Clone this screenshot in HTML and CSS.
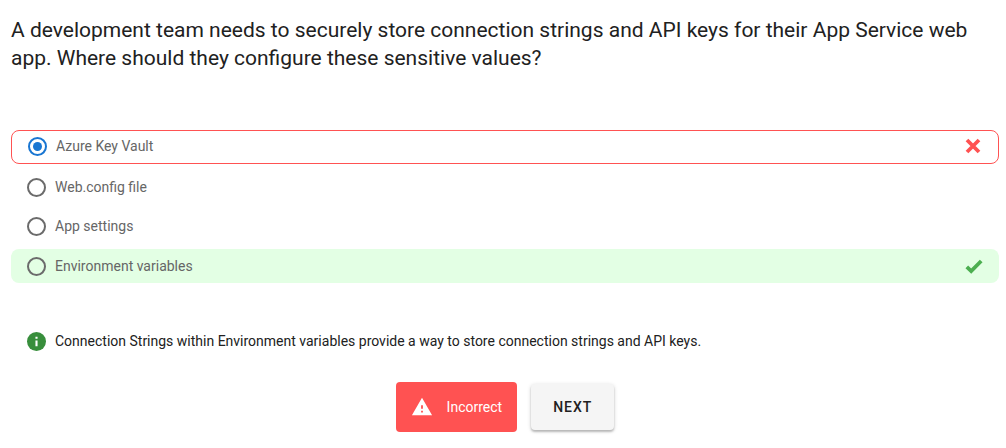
FILE: index.html
```html
<!DOCTYPE html>
<html lang="en">
<head>
<meta charset="utf-8">
<meta name="viewport" content="width=device-width, initial-scale=1">
<title>Quiz question</title>
<link rel="stylesheet" href="styles.css">
</head>
<body>
<main class="quiz">
  <h1 class="question" id="question">A development team needs to securely store connection strings and API keys for their App Service web app. Where should they configure these sensitive values?</h1>
  <div class="options" role="radiogroup" aria-labelledby="question">
    <label class="option option-wrong">
      <input class="radio" type="radio" name="answer" checked>
      <span class="label">Azure Key Vault</span>
      <svg class="mark" viewBox="0 0 18 18" aria-hidden="true"><path d="M3 3 15 15M15 3 3 15" fill="none" stroke="#ff5252" stroke-width="3.8"/></svg>
    </label>
    <label class="option">
      <input class="radio" type="radio" name="answer">
      <span class="label">Web.config file</span>
    </label>
    <label class="option">
      <input class="radio" type="radio" name="answer">
      <span class="label">App settings</span>
    </label>
    <label class="option option-correct">
      <input class="radio" type="radio" name="answer">
      <span class="label">Environment variables</span>
      <svg class="mark" viewBox="0 0 18 18" aria-hidden="true"><path d="M1.8 9.8 6.2 14 16.2 4" fill="none" stroke="#4caf50" stroke-width="3.8"/></svg>
    </label>
  </div>
  <p class="explanation">
    <svg class="info" viewBox="0 0 18 18" aria-hidden="true"><circle cx="9" cy="9" r="9" fill="#388e3c"/><path d="M8 4.5h2v2H8zM8 8h2v5.5H8z" fill="#fff"/></svg>
    <span>Connection Strings within Environment variables provide a way to store connection strings and API keys.</span>
  </p>
  <div class="actions">
    <div class="status" role="status">
      <svg class="warning" viewBox="0 0 24 24" aria-hidden="true"><path d="M1 21h22L12 2 1 21zm12-3h-2v-2h2v2zm0-4h-2v-4h2v4z" fill="#fff"/></svg>
      <span>Incorrect</span>
    </div>
    <button class="next" type="button">NEXT</button>
  </div>
</main>
</body>
</html>
```
FILE: styles.css
```css
* {
  box-sizing: border-box;
}

body {
  margin: 0;
  background: #fff;
  color: #212121;
  font-family: Roboto, "Liberation Sans", sans-serif;
  font-size: 14px;
  line-height: 20px;
}

.quiz {
  padding: 16px 7px 16px 11px;
}

.question {
  margin: 0 0 58px;
  font-size: 21px;
  font-weight: 400;
  line-height: 28px;
}

.options {
  display: flex;
  flex-direction: column;
  gap: 7px;
}

.option {
  display: flex;
  align-items: center;
  gap: 9px;
  min-height: 32px;
  padding: 0 16px;
  border-radius: 8px;
  color: #666;
  cursor: pointer;
}

.option-wrong {
  min-height: 34px;
  padding-bottom: 2px;
  border: 1px solid #ff5252;
}

.option-correct {
  min-height: 34px;
  background: #e3ffe4;
}

.radio {
  appearance: none;
  display: grid;
  place-items: center;
  flex: none;
  width: 19px;
  height: 19px;
  margin: 0;
  border: 2px solid #6b6b6b;
  border-radius: 50%;
}

.radio:checked {
  border-color: #1976d2;
}

.radio:checked::before {
  content: "";
  width: 9px;
  height: 9px;
  border-radius: 50%;
  background: #1976d2;
}

.label {
  flex: 1;
}

.mark {
  flex: none;
  width: 18px;
  height: 18px;
}

.explanation {
  display: flex;
  align-items: center;
  gap: 9px;
  margin: 48px 0 0;
  padding: 0 16px;
}

.info {
  flex: none;
  width: 19px;
  height: 19px;
}

.actions {
  display: flex;
  justify-content: center;
  align-items: center;
  gap: 14px;
  margin-top: 31px;
}

.status {
  display: flex;
  align-items: center;
  gap: 14px;
  min-height: 50px;
  padding: 0 15px;
  border-radius: 4px;
  background: #ff5252;
  color: #fff;
}

.warning {
  width: 22px;
  height: 22px;
}

.next {
  min-height: 46px;
  padding: 0 22px;
  border: 0;
  border-radius: 4px;
  background: #f5f5f5;
  box-shadow: 0 2px 2px rgba(0, 0, 0, 0.2), 0 1px 4px rgba(0, 0, 0, 0.16);
  color: #212121;
  font: 500 14px/20px Roboto, "Liberation Sans", sans-serif;
  letter-spacing: 1px;
  cursor: pointer;
}
```
